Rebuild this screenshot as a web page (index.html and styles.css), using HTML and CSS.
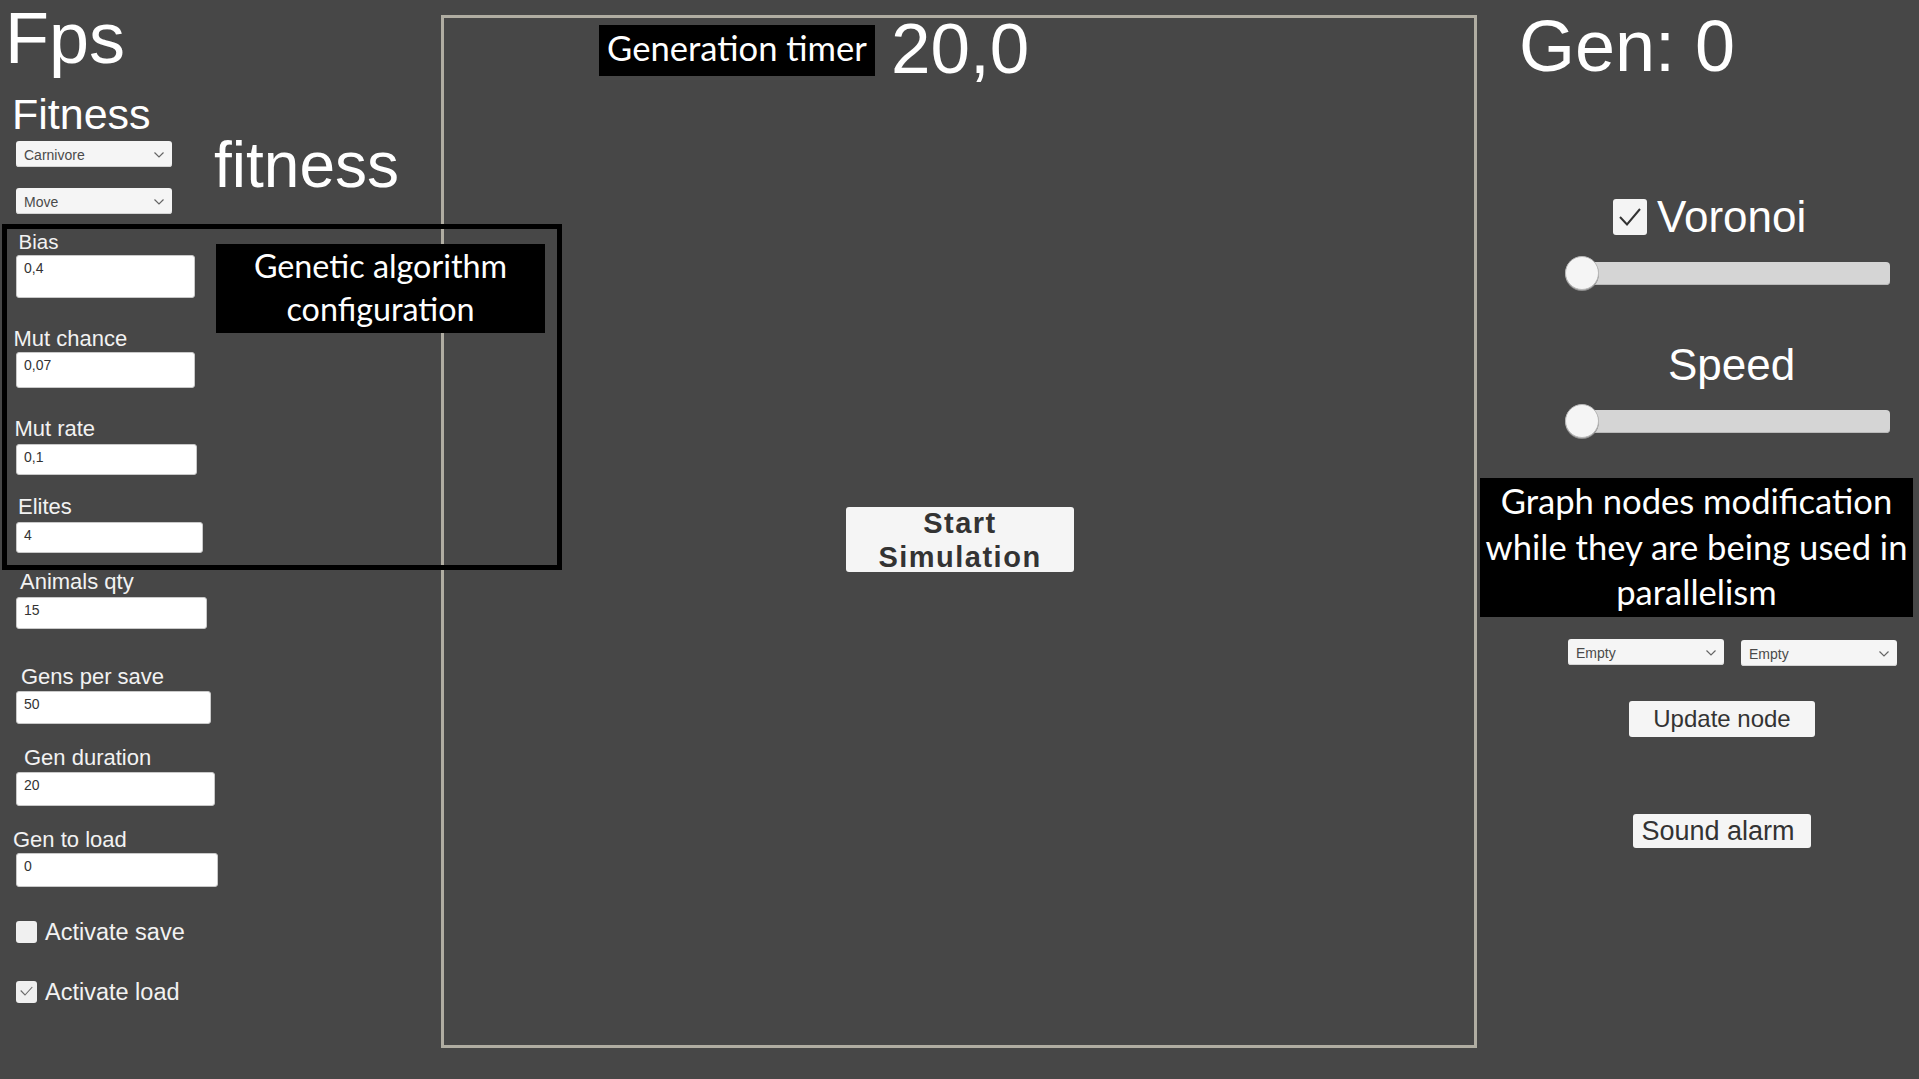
FILE: index.html
```html
<!DOCTYPE html>
<html lang="en">
<head>
<meta charset="utf-8">
<title>Simulation</title>
<link rel="stylesheet" href="styles.css">
</head>
<body>
<div class="screen">
  <div class="left">
    <div class="fps">Fps</div>
    <div class="fitness-title">Fitness</div>
    <div class="fitness-row">
      <div class="dd-col">
        <div class="dropdown">Carnivore<svg class="chev" width="10" height="6" viewBox="0 0 10 6"><polyline points="0.5,0.5 5,5 9.5,0.5" fill="none" stroke="#666" stroke-width="1.2"/></svg></div>
        <div class="dropdown">Move<svg class="chev" width="10" height="6" viewBox="0 0 10 6"><polyline points="0.5,0.5 5,5 9.5,0.5" fill="none" stroke="#666" stroke-width="1.2"/></svg></div>
      </div>
      <div class="fitness-big">fitness</div>
    </div>

    <div class="ga-box">
      <div class="ga-fields">
        <div class="flabel lb-bias">Bias</div>
        <div class="finput in-bias">0,4</div>
        <div class="flabel lb-mutc">Mut chance</div>
        <div class="finput in-mutc">0,07</div>
        <div class="flabel lb-mutr">Mut rate</div>
        <div class="finput in-mutr">0,1</div>
        <div class="flabel lb-elites">Elites</div>
        <div class="finput in-elites">4</div>
      </div>
      <div class="ga-label">Genetic algorithm configuration</div>
    </div>

    <div class="flabel lb-animals">Animals qty</div>
    <div class="finput out in-animals">15</div>
    <div class="flabel lb-gens">Gens per save</div>
    <div class="finput out in-gens">50</div>
    <div class="flabel lb-dur">Gen duration</div>
    <div class="finput out in-dur">20</div>
    <div class="flabel lb-load">Gen to load</div>
    <div class="finput out in-load">0</div>

    <div class="check-row row-save">
      <div class="check-sm"></div>
      <div class="check-text">Activate save</div>
    </div>
    <div class="check-row row-load">
      <div class="check-sm"><svg width="21" height="22" viewBox="0 0 21 22"><polyline points="4.7,9.5 9,14 16.3,6" fill="none" stroke="#6a6a6a" stroke-width="1.1"/></svg></div>
      <div class="check-text">Activate load</div>
    </div>
  </div>

  <div class="frame">
    <div class="timer-row">
      <div class="timer-label">Generation timer</div>
      <div class="timer-value">20,0</div>
    </div>
    <div class="start-btn">Start<br>Simulation</div>
  </div>

  <div class="right">
    <div class="gen">Gen: 0</div>
    <div class="voronoi-row">
      <div class="check-lg"><svg width="34" height="36" viewBox="0 0 34 36"><polyline points="7,18 14,25.5 27,10" fill="none" stroke="#333" stroke-width="2"/></svg></div>
      <div class="voronoi-text">Voronoi</div>
    </div>
    <div class="slider slider-1">
      <div class="slider-track"></div>
      <div class="slider-knob"></div>
    </div>
    <div class="speed">Speed</div>
    <div class="slider slider-2">
      <div class="slider-track"></div>
      <div class="slider-knob"></div>
    </div>
    <div class="graph-label">Graph nodes modification while they are being used in parallelism</div>
    <div class="node-row">
      <div class="dropdown">Empty<svg class="chev" width="10" height="6" viewBox="0 0 10 6"><polyline points="0.5,0.5 5,5 9.5,0.5" fill="none" stroke="#666" stroke-width="1.2"/></svg></div>
      <div class="dropdown dd-second">Empty<svg class="chev" width="10" height="6" viewBox="0 0 10 6"><polyline points="0.5,0.5 5,5 9.5,0.5" fill="none" stroke="#666" stroke-width="1.2"/></svg></div>
    </div>
    <div class="btn btn-update">Update node</div>
    <div class="btn btn-alarm">Sound alarm</div>
  </div>
</div>
</body>
</html>
```
FILE: styles.css
```css
* { box-sizing: border-box; margin: 0; padding: 0; }
html, body { margin: 0; padding: 0; }
body {
  background: #474747;
  font-family: "Liberation Sans", Arial, sans-serif;
  color: #ffffff;
  width: 1919px;
  height: 1079px;
  overflow: hidden;
}
.screen { display: flex; align-items: flex-start; height: 1079px; }

/* ---------- left panel ---------- */
.left { width: 441px; flex: none; position: relative; z-index: 1; }
.fps { font-size: 72px; line-height: 72px; height: 72px; margin-top: 2px; padding-left: 5px; }
.fitness-title { font-size: 43px; line-height: 41px; height: 41px; margin-top: 20px; padding-left: 12px; white-space: nowrap; }
.fitness-row { display: flex; align-items: flex-start; margin-top: 6px; padding-left: 16px; }
.dd-col { display: flex; flex-direction: column; gap: 21px; width: 156px; flex: none; }
.dropdown {
  position: relative;
  width: 156px; height: 26px;
  background: #f5f5f5;
  border-radius: 3px;
  color: #4a4a4a;
  font-size: 14px; line-height: 28px;
  padding-left: 8px;
  box-shadow: inset 0 -1px 0 #d4d4d4;
}
.chev { position: absolute; right: 8px; top: 11px; }
.fitness-big { font-size: 64px; line-height: 62px; margin-top: -7px; margin-left: 42px; white-space: nowrap; }

.ga-box {
  margin-top: 10px; margin-left: 2px;
  width: 560px;
  border: 5px solid #000;
  display: flex; align-items: flex-start;
  padding-bottom: 12px;
}
.ga-fields { width: 200px; flex: none; }
.ga-label {
  margin-left: 9px; margin-top: 15px;
  width: 329px; height: 89px;
  background: #000;
  font-family: Lato, "Open Sans", sans-serif;
  font-size: 32.3px; line-height: 43px;
  text-align: center; color: #fff;
}

.flabel { font-size: 22px; line-height: 21px; height: 21px; color: #f2f2f2; white-space: nowrap; }
.finput {
  background: #ffffff;
  border-radius: 3px;
  border: 1px solid #c9c9c9;
  color: #333;
  font-size: 14px; line-height: 14px;
  padding: 5px 0 0 7px;
  margin-left: 9px;
}
.finput.out { margin-left: 16px; }

.lb-bias { font-size: 20.5px; line-height: 20px; height: 20px; margin-top: 3px; padding-left: 11.5px; }
.in-bias { margin-top: 3px; width: 179px; height: 43px; }
.lb-mutc { margin-top: 30px; padding-left: 6.4px; }
.in-mutc { margin-top: 3px; width: 179px; height: 36px; }
.lb-mutr { margin-top: 30px; padding-left: 7.4px; }
.in-mutr { margin-top: 5px; width: 181px; height: 31px; }
.lb-elites { margin-top: 21px; padding-left: 11px; }
.in-elites { margin-top: 5px; width: 187px; height: 31px; }

.lb-animals { margin-top: 1px; padding-left: 20px; }
.in-animals { margin-top: 5px; width: 191px; height: 32px; }
.lb-gens { margin-top: 37px; padding-left: 21px; }
.in-gens { margin-top: 4px; width: 195px; height: 33px; }
.lb-dur { margin-top: 23px; padding-left: 24px; }
.in-dur { margin-top: 4px; width: 199px; height: 34px; }
.lb-load { margin-top: 23px; padding-left: 13px; }
.in-load { margin-top: 3px; width: 202px; height: 34px; }

.check-row { display: flex; align-items: center; height: 22px; margin-left: 16px; }
.row-save { margin-top: 34px; }
.row-load { margin-top: 38px; }
.check-sm { width: 21px; height: 22px; background: #f0f0f0; border-radius: 3px; flex: none; }
.check-sm svg { display: block; }
.check-text { font-size: 23.5px; line-height: 22px; margin-left: 8px; color: #f2f2f2; white-space: nowrap; }

/* ---------- center frame ---------- */
.frame {
  flex: none;
  width: 1036px; height: 1033px;
  margin-top: 15px;
  border: 3px solid #b0ada2;
  display: flex; flex-direction: column;
}
.timer-row { display: flex; align-items: flex-start; height: 51px; margin-top: 7px; margin-left: 155px; }
.timer-label {
  width: 276px; height: 51px;
  background: #000;
  font-family: Lato, "Open Sans", sans-serif;
  font-size: 34.6px; line-height: 46px;
  text-align: center; white-space: nowrap;
}
.timer-value { font-size: 71px; line-height: 70px; margin-top: -11px; margin-left: 16px; white-space: nowrap; }
.start-btn {
  align-self: center;
  margin-top: 431px; margin-left: 2px;
  width: 228px; height: 65px;
  background: #f5f5f5;
  border-radius: 3px;
  color: #333;
  font-weight: bold;
  font-size: 29px; line-height: 34px;
  letter-spacing: 1.5px;
  text-align: center;
  display: flex; align-items: center; justify-content: center;
}

/* ---------- right panel ---------- */
.right { width: 442px; flex: none; }
.gen { font-size: 72px; line-height: 71px; height: 71px; margin-top: 11px; padding-left: 42px; white-space: nowrap; }
.voronoi-row { display: flex; align-items: center; height: 36px; margin-top: 117px; margin-left: 136px; }
.check-lg { width: 34px; height: 36px; background: #f4f4f4; border-radius: 3px; flex: none; }
.check-lg svg { display: block; }
.voronoi-text { font-size: 44px; line-height: 36px; margin-left: 10px; white-space: nowrap; }

.slider { position: relative; width: 325px; height: 34px; margin-left: 88px; padding-top: 5.5px; }
.slider-1 { margin-top: 21px; }
.slider-2 { margin-top: 18px; }
.slider-track {
  margin-left: 25px;
  height: 23px;
  background: #d5d5d5;
  border-radius: 4px;
  box-shadow: inset 0 -1px 0 #b9b9b9;
}
.slider-knob {
  position: absolute; left: 0; top: 0;
  width: 34px; height: 34px;
  border-radius: 50%;
  background: #f5f5f5;
  border: 1px solid #b8b8b8;
  box-shadow: 0 1px 0 #8e8e8e;
}
.speed { font-size: 44px; line-height: 43px; height: 43px; margin-top: 53px; padding-left: 191px; white-space: nowrap; }

.graph-label {
  margin-top: 40px; margin-left: 3px;
  width: 433px; height: 139px;
  background: #000;
  font-family: Lato, "Open Sans", sans-serif;
  font-size: 34.6px; line-height: 45.5px;
  text-align: center;
}
.node-row { display: flex; gap: 17px; margin-top: 22px; margin-left: 91px; }
.dd-second { margin-top: 1px; }

.btn {
  background: #f5f5f5;
  border-radius: 3px;
  color: #333;
  text-align: center;
  white-space: nowrap;
}
.btn-update { margin-top: 35px; margin-left: 152px; width: 186px; height: 36px; font-size: 24px; line-height: 36px; }
.btn-alarm { margin-top: 77px; margin-left: 156px; width: 178px; height: 34px; font-size: 27px; line-height: 34px; padding-right: 8px; }
```
